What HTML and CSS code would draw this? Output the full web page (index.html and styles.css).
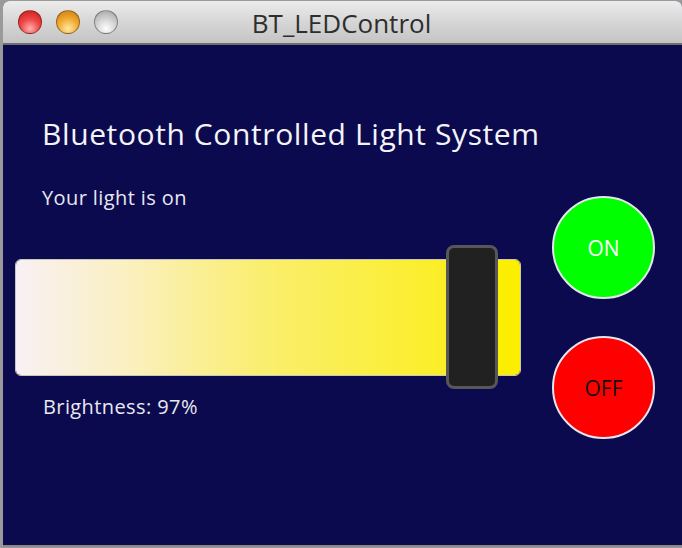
FILE: index.html
```html
<!DOCTYPE html>
<html>
<head>
<meta charset="utf-8">
<link rel="stylesheet" href="styles.css">
</head>
<body>
<div class="backdrop">
  <div class="window">
    <div class="titlebar">
      <div class="lights">
        <span class="light red"></span>
        <span class="light amber"></span>
        <span class="light gray"></span>
      </div>
      <div class="title">BT_LEDControl</div>
    </div>
    <div class="content">
      <div class="main">
        <h1 class="heading">Bluetooth Controlled Light System</h1>
        <p class="status">Your light is on</p>
        <div class="slider">
          <div class="track">
            <div class="fill"></div>
            <div class="rest"></div>
          </div>
          <div class="thumb"></div>
        </div>
        <p class="brightness">Brightness: 97%</p>
      </div>
      <div class="buttons">
        <button class="circle on">ON</button>
        <button class="circle off">OFF</button>
      </div>
    </div>
  </div>
</div>
</body>
</html>
```
FILE: styles.css
```css
html, body {
  margin: 0;
  padding: 0;
  width: 682px;
  height: 548px;
  overflow: hidden;
  background: #9a9a9a;
}
.backdrop {
  padding: 1px 0 0 3px;
  height: 547px;
  box-sizing: border-box;
}
.window {
  width: 679px;
  height: 546px;
  display: flex;
  flex-direction: column;
  border-radius: 6px 6px 0 0;
  overflow: hidden;
  background: #0b0a4f;
  border-bottom: 2px solid #8a8a8a;
  box-sizing: border-box;
}
.titlebar {
  height: 42px;
  flex: none;
  position: relative;
  display: flex;
  align-items: center;
  justify-content: center;
  background: linear-gradient(#ececec, #d6d6d6 50%, #c4c4c4);
  border-bottom: 2px solid #6e6e6e;
}
.lights {
  position: absolute;
  left: 15px;
  top: 9px;
  display: flex;
  gap: 14px;
}
.light {
  width: 24px;
  height: 24px;
  border-radius: 50%;
  box-sizing: border-box;
  border: 1px solid rgba(0,0,0,0.35);
}
.light.red {
  background: radial-gradient(circle at 50% 80%, #ffb0b0 0, #f04848 45%, #c81818 100%);
}
.light.amber {
  background: radial-gradient(circle at 50% 80%, #ffe8a0 0, #f0a830 50%, #c87810 100%);
}
.light.gray {
  background: radial-gradient(circle at 50% 80%, #ffffff 0, #d0d0d0 50%, #a0a0a0 100%);
}
.title {
  font-family: "Open Sans", sans-serif;
  font-size: 26px;
  color: #2e2e2e;
  margin-left: -2px;
  margin-top: 1px;
}
.content {
  flex: 1;
  display: flex;
  background: #0b0a4f;
}
.main {
  width: 530px;
  flex: none;
  padding-left: 12px;
  box-sizing: border-box;
}
.heading {
  margin: 70px 0 0 27px;
  font-family: "Open Sans", sans-serif;
  font-weight: normal;
  font-size: 30px;
  letter-spacing: 0.6px;
  line-height: 38px;
  color: #f4f4f8;
  white-space: nowrap;
}
.status {
  margin: 32px 0 0 27px;
  font-family: "Open Sans", sans-serif;
  font-size: 20px;
  letter-spacing: 0.4px;
  line-height: 26px;
  color: #e8e8f0;
}
.slider {
  position: relative;
  margin-top: 34px;
  width: 506px;
  height: 144px;
  display: flex;
  align-items: center;
}
.track {
  width: 506px;
  height: 117px;
  display: flex;
  border-radius: 6px;
  overflow: hidden;
  border: 1px solid #c8c8b8;
  box-sizing: border-box;
}
.fill {
  width: 445px;
  background: linear-gradient(to right, #f9f0f5, #faf0c0 25%, #faee70 55%, #fbee20);
}
.rest {
  flex: 1;
  background: #fcee00;
}
.thumb {
  position: absolute;
  left: 431px;
  top: 0;
  width: 52px;
  height: 144px;
  box-sizing: border-box;
  border: 3px solid #575757;
  border-radius: 8px;
  background: #212121;
}
.brightness {
  margin: 5px 0 0 28px;
  font-family: "Open Sans", sans-serif;
  font-size: 20px;
  letter-spacing: 0.4px;
  line-height: 26px;
  color: #e8e8f0;
}
.buttons {
  display: flex;
  flex-direction: column;
  gap: 37px;
  padding: 151px 0 0 19px;
}
.circle {
  width: 103px;
  height: 103px;
  border-radius: 50%;
  border: 2px solid #e6e6ee;
  font-family: "Open Sans", sans-serif;
  font-size: 21px;
  padding: 0;
}
.circle.on {
  background: #00ff00;
  color: #ffffff;
}
.circle.off {
  background: #ff0000;
  color: #111111;
}
```
